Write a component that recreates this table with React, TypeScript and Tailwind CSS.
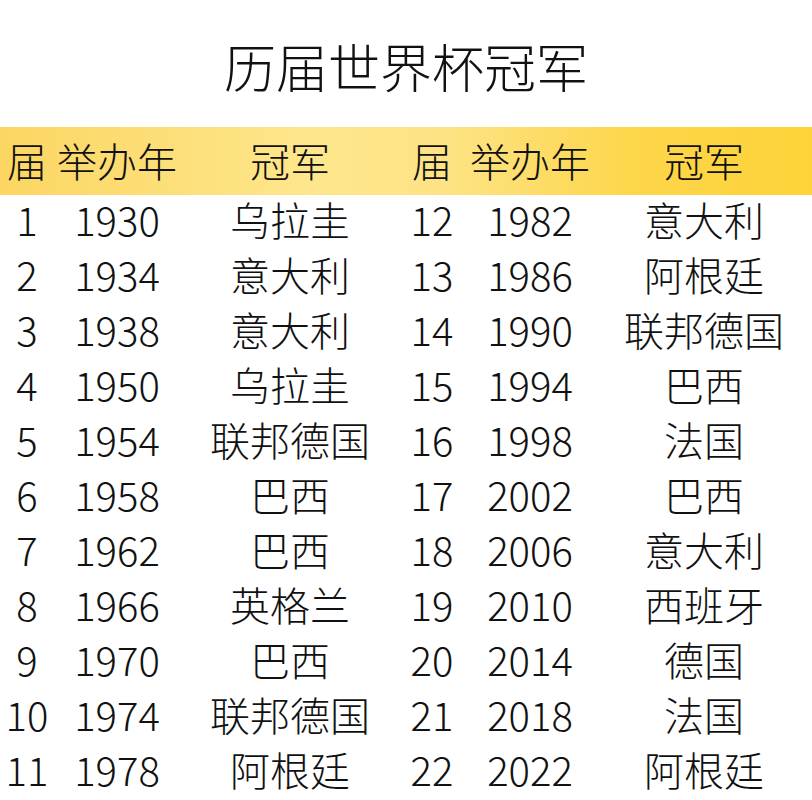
const rows: [number, number, string][] = [
  [1, 1930, "乌拉圭"],
  [2, 1934, "意大利"],
  [3, 1938, "意大利"],
  [4, 1950, "乌拉圭"],
  [5, 1954, "联邦德国"],
  [6, 1958, "巴西"],
  [7, 1962, "巴西"],
  [8, 1966, "英格兰"],
  [9, 1970, "巴西"],
  [10, 1974, "联邦德国"],
  [11, 1978, "阿根廷"],
  [12, 1982, "意大利"],
  [13, 1986, "阿根廷"],
  [14, 1990, "联邦德国"],
  [15, 1994, "巴西"],
  [16, 1998, "法国"],
  [17, 2002, "巴西"],
  [18, 2006, "意大利"],
  [19, 2010, "西班牙"],
  [20, 2014, "德国"],
  [21, 2018, "法国"],
  [22, 2022, "阿根廷"],
]

const grid = "grid grid-cols-[54px_126px_220px_64px_132px_216px] items-center text-center"

export default function App() {
  const left = rows.slice(0, 11)
  const right = rows.slice(11)

  return (
    <div className="w-[812px] h-[800px] bg-white text-[#111] overflow-hidden font-['Noto_Sans_CJK_SC','Noto_Sans',sans-serif] font-light">
      {/* Title */}
      <div className="h-[127px] flex items-center justify-center pt-[5px]">
        <h1 className="text-[52px] leading-none">历届世界杯冠军</h1>
      </div>

      {/* Header */}
      <div className={`${grid} h-[68px] pb-[3px] text-[40px] leading-none bg-[linear-gradient(90deg,#fbd662_0%,#fee68c_38%,#fde384_55%,#fdd64a_78%,#fdd338_100%)]`}>
        <div>届</div>
        <div>举办年</div>
        <div>冠军</div>
        <div>届</div>
        <div>举办年</div>
        <div>冠军</div>
      </div>

      {/* Rows */}
      <div className="flex flex-col">
        {left.map((r, i) => {
          const q = right[i]
          return (
            <div key={r[0]} className={`${grid} h-[55px] pb-[8px] text-[40px] leading-none`}>
              <div>{r[0]}</div>
              <div>{r[1]}</div>
              <div>{r[2]}</div>
              <div>{q[0]}</div>
              <div>{q[1]}</div>
              <div>{q[2]}</div>
            </div>
          )
        })}
      </div>
    </div>
  )
}
